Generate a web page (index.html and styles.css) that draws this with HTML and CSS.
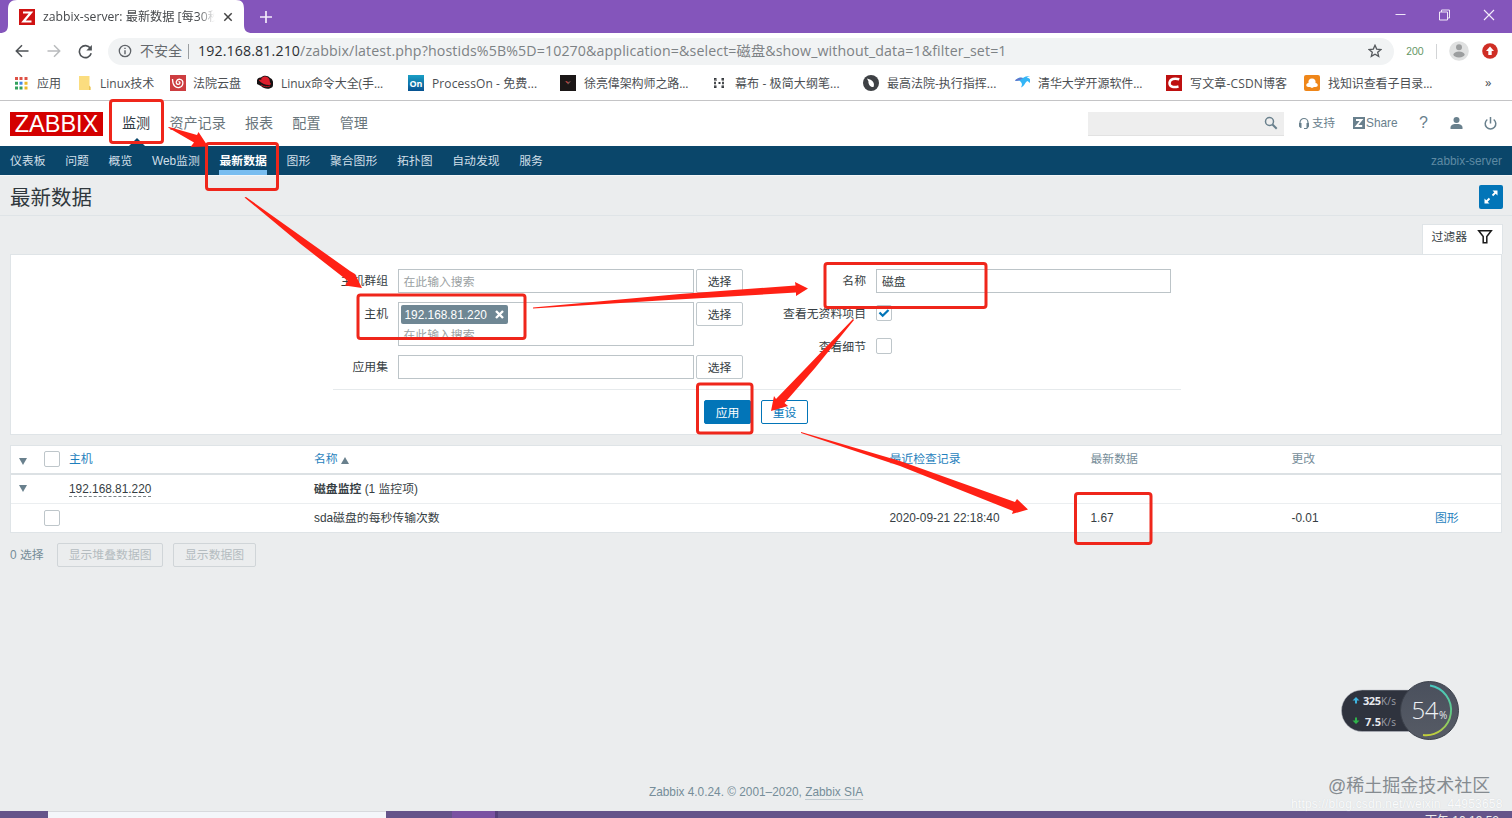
FILE: index.html
```html
<!DOCTYPE html>
<html lang="zh-CN">
<head>
<meta charset="utf-8">
<title>zabbix-server: 最新数据</title>
<link rel="stylesheet" href="styles.css">
</head>
<body>
<div class="screen">
  <header class="tabstrip">
    <svg class="tab-shape" width="262" height="33" viewBox="0 0 262 33"><path d="M0 33C5 33 8 31 8 25V9C8 3 11 0 17 0H236C242 0 244 3 244 9V25C244 31 247 33 252 33Z" fill="#fff"/></svg>
    <div class="tab">
      <svg width="16" height="16" viewBox="0 0 16 16"><rect width="16" height="16" fill="#cf1212"/><path d="M4 3.500H12L4.500 12.500H12.500" fill="none" stroke="#fff" stroke-width="2.200"/></svg>
      <span class="tab-title">zabbix-server: 最新数据 [每30秒</span>
      <svg class="tab-close" width="10" height="10" viewBox="0 0 10 10"><path d="M1.300 1.300L8.700 8.700M8.700 1.300L1.300 8.700" stroke="#444" stroke-width="1.500"/></svg>
    </div>
    <svg class="newtab" width="12" height="12" viewBox="0 0 12 12"><path d="M6 0V12M0 6H12" stroke="#f3ecfa" stroke-width="1.700"/></svg>
    <div class="winctl">
      <svg width="11" height="12" viewBox="0 0 11 12"><path d="M.5 5.500H10.500" stroke="#eee6f8"/></svg>
      <svg width="11" height="12" viewBox="0 0 11 12"><path d="M.5 3H8.500V11H.5ZM2.500 3V1H10.500V9H8.500" fill="none" stroke="#f0e8f8"/></svg>
      <svg width="12" height="12" viewBox="0 0 12 12"><path d="M1 1L11 11M11 1L1 11" stroke="#f5effb" stroke-width="1.100"/></svg>
    </div>
  </header>

  <div class="toolbar">
    <svg width="14" height="14" viewBox="0 0 14 14"><path d="M13.500 7H1.500M7 1.300L1.300 7L7 12.700" fill="none" stroke="#4e5256" stroke-width="1.500"/></svg>
    <svg width="14" height="14" viewBox="0 0 14 14"><path d="M.5 7H12.500M7 1.300L12.700 7L7 12.700" fill="none" stroke="#b9bbbd" stroke-width="1.500"/></svg>
    <svg width="15" height="15" viewBox="0 0 15 15"><path d="M12.400 4.300A6 6 0 1 0 13.200 9.200" fill="none" stroke="#4e5256" stroke-width="1.600"/><path d="M13.900 1V6.600H8.300Z" fill="#4e5256"/></svg>
    <div class="omnibox">
      <svg width="14" height="14" viewBox="0 0 14 14"><circle cx="7" cy="7" r="5.700" fill="none" stroke="#5f6368" stroke-width="1.300"/><path d="M7 6.200V10.200M7 3.700V5" stroke="#5f6368" stroke-width="1.400"/></svg>
      <span class="unsafe">不安全</span><i class="sep"></i>
      <span class="url"><b>192.168.81.210</b>/zabbix/latest.php?hostids%5B%5D=10270&amp;application=&amp;select=磁盘&amp;show_without_data=1&amp;filter_set=1</span>
      <svg class="star" width="14" height="14" viewBox="0 0 14 14"><path d="M7 1.300L8.700 5.100L12.900 5.500L9.700 8.300L10.700 12.400L7 10.200L3.300 12.400L4.300 8.300L1.100 5.500L5.300 5.100Z" fill="none" stroke="#55595d" stroke-width="1.300"/></svg>
    </div>
    <span class="ext200">200</span>
    <i class="toolsep"></i>
    <svg class="avatar" width="20" height="20" viewBox="0 0 20 20"><circle cx="10" cy="10" r="9.800" fill="#e0e1e1"/><circle cx="10" cy="6.200" r="3" fill="#9c9e9f"/><ellipse cx="10" cy="13.500" rx="5.600" ry="3" fill="#9c9e9f"/></svg>
    <svg class="update" width="16" height="16" viewBox="0 0 16 16"><circle cx="8" cy="8" r="7.800" fill="#cf2e25"/><path d="M8 3.500L12 8H9.700V12H6.300V8H4Z" fill="#fff"/></svg>
  </div>

  <nav class="bookmarks">
    <div class="bm"><svg width="16" height="16" viewBox="0 0 16 16"><path d="M2 2h3v3H2zM6.500 2h3v3h-3zM11.500 2h3v3h-3z" fill="#de5145"/><path d="M2 6.700h3v3H2zM2 11.400h3v3H2zM6.500 11.400h3v3h-3z" fill="#32a05c"/><path d="M6.500 6.700h3v3h-3z" fill="#4085e8"/><path d="M11.500 6.700h3v3h-3zM11.500 11.400h3v3h-3z" fill="#edb72a"/></svg><span>应用</span></div>
    <div class="bm"><svg width="16" height="16" viewBox="0 0 16 16"><path d="M3 1H13.500V11L14.500 12V15H3Z" fill="#fbdd7f"/><path d="M13 10.500L14.500 12V15H13Z" fill="#e9c45a"/></svg><span>Linux技术</span></div>
    <div class="bm"><svg class="nudge" width="16" height="16" viewBox="0 0 16 16"><rect width="16" height="16" fill="#cd3d40"/><path d="M2.500 4C2.500 11 6 13 9 12.500C14 11.500 14 5 10 4.300C6 3.700 5 9 8 9.400C10.500 9.500 10.500 6.500 8.500 6.600" fill="none" stroke="#fff" stroke-width="1.300"/></svg><span>法院云盘</span></div>
    <div class="bm"><svg width="16" height="16" viewBox="0 0 16 16"><path d="M0 9C-1 5 1 2 4 2.500C6 0 11 0 13 3C16 4 17 8 15.500 12C12 15 7 14 4 11Z" fill="#171213"/><path d="M4.500 3C7 .5 11 1 12.500 4.500L13 7.500C14.500 8.500 14 10 12 10C8 10 4 8 2 5.500C2 4.500 3 4 4.200 5Z" fill="#dc1e2c"/><path d="M4 10C7 12 10 12 13 11" stroke="#bb1420" fill="none"/></svg><span class="w-cmd">Linux命令大全(手...</span></div>
    <div class="bm"><svg width="16" height="16" viewBox="0 0 16 16"><defs><linearGradient id="on" x2="0" y2="1"><stop stop-color="#1a9fc5"/><stop offset="1" stop-color="#075291"/></linearGradient></defs><rect width="16" height="16" fill="url(#on)"/><text x="8" y="11.500" text-anchor="middle" textLength="13" lengthAdjust="spacingAndGlyphs" class="on-logo">On</text></svg><span class="w-on">ProcessOn - 免费...</span></div>
    <div class="bm"><svg width="16" height="16" viewBox="0 0 16 16"><rect width="16" height="16" fill="#1b1717"/><path d="M4.500 6L8 7L11 6L9.500 8L8 9.500L7 8Z" fill="#76534f"/><path d="M6 6.500L8 7.500" stroke="#d33"/></svg><span class="w-xu">徐亮偉架构师之路...</span></div>
    <div class="bm"><svg width="16" height="16" viewBox="0 0 16 16"><path d="M3 3h2.500v2.500H3zM3 7h2v2H3zM3 10.500h2.500V13H3zM10.500 3H13v2.500h-2.500zM11 7h2v2h-2zM10.500 10.500H13V13h-2.500zM7.500 7h2v2h-2z" fill="#34383d"/><path d="M4 4V12M12 4V12M4 4L6 6" stroke="#777" stroke-width=".7"/></svg><span class="w-mb">幕布 - 极简大纲笔...</span></div>
    <div class="bm"><svg width="16" height="16" viewBox="0 0 16 16"><circle cx="8" cy="8" r="8" fill="#3e4145"/><path d="M4 3.500L7 4.500C10 5.500 12 9 10.500 12C7.500 12.500 5 9 5.500 6.500Z" fill="#fff"/></svg><span>最高法院-执行指挥...</span></div>
    <div class="bm"><svg width="16" height="16" viewBox="0 0 16 16"><path d="M1 6C4 2 7 2 9 3Q11 1 16 1Q13 2 13 3C16 3 17 5 16 8L13.500 6C11 7 11 11 7 12.500C9 9 7.500 7 5 5.500Z" fill="#34b5f6"/><path d="M1 6C3 3 6 2 9 3L5 5.500Z" fill="#6575c9"/></svg><span class="w-xu">清华大学开源软件...</span></div>
    <div class="bm"><svg width="16" height="16" viewBox="0 0 16 16"><rect width="16" height="16" fill="#be1010"/><path d="M13.300 4.300C9 3 4 3.500 3.500 8C3.500 12.200 8 12.700 12.500 11.500" fill="none" stroke="#fff" stroke-width="2.500"/></svg><span class="w-csdn">写文章-CSDN博客</span></div>
    <div class="bm"><svg width="16" height="16" viewBox="0 0 16 16"><rect width="16" height="16" rx="2" fill="#ef8619"/><path d="M4.500 8C4 5 5.500 3.500 8 3.500S12 5 11.500 8C14.500 8.500 14.500 12 11.500 12H10L8 13L6 12H4.500C1.500 12 1.500 8.500 4.500 8Z" fill="#fff"/></svg><span class="w-xu">找知识查看子目录...</span></div>
    <div class="more">»</div>
  </nav>

  <main class="zbx">
    <div class="mainbar">
      <div class="logo"><span>ZABBIX</span></div>
      <nav class="mainmenu"><span class="cur">监测</span><span>资产记录</span><span>报表</span><span>配置</span><span>管理</span></nav>
      <div class="search"><svg width="14" height="14" viewBox="0 0 14 14"><circle cx="5.500" cy="5.500" r="4" fill="none" stroke="#69808d" stroke-width="1.500"/><path d="M8.500 8.500L12.700 12.700" stroke="#69808d" stroke-width="2"/></svg></div>
      <div class="userlinks">
        <svg width="12" height="13" viewBox="0 0 12 13"><path d="M2 8V5.500A4 4 0 0 1 10 5.500V8" fill="none" stroke="#69808d" stroke-width="1.200"/><path d="M1 6H3.500V11H2.500L1 9.500ZM8.500 6H11V9.500L9 12H6V11H8.500Z" fill="#69808d"/></svg><span class="support">支持</span>
        <svg width="12" height="12" viewBox="0 0 12 12"><rect width="12" height="12" fill="#69808d"/><path d="M3 3H8.500L3.500 9H9.200" fill="none" stroke="#fff" stroke-width="1.800"/></svg><span class="share">Share</span>
        <span class="help">?</span>
        <svg width="13" height="12" viewBox="0 0 13 12"><circle cx="6.500" cy="3" r="3" fill="#69808d"/><path d="M.5 12V10C1 7.500 4 7 6.500 7S12 7.500 12.500 10V12Z" fill="#69808d"/></svg>
        <svg class="power" width="13" height="13" viewBox="0 0 13 13"><path d="M3.300 2.500A5.300 5.300 0 1 0 9.700 2.500M6.500 0V6.500" fill="none" stroke="#69808d" stroke-width="1.500"/></svg>
      </div>
    </div>
    <div class="subbar">
      <span>仪表板</span><span>问题</span><span>概览</span><span>Web监测</span><span class="sel">最新数据</span><span>图形</span><span>聚合图形</span><span>拓扑图</span><span>自动发现</span><span>服务</span>
      <span class="server">zabbix-server</span>
    </div>
    <div class="titlerow">
      <h1>最新数据</h1>
      <div class="full"><svg width="16" height="16" viewBox="0 0 16 16"><path d="M9.500 6.500L13 3M6.500 9.500L3 13" stroke="#fff" stroke-width="1.800"/><path d="M9.500 1.500H14.500V6.500ZM1.500 9.500V14.500H6.500Z" fill="#fff"/></svg></div>
    </div>
    <div class="filtertabs"><div class="filtertab"><span>过滤器</span><svg width="16" height="16" viewBox="0 0 16 16"><path d="M1.700 1.700H14.300L9.800 7.500V13.800H6.200V7.500Z" fill="none" stroke="#1b1b1b" stroke-width="1.500"/></svg></div></div>
    <section class="filter">
      <div class="formcols">
        <div class="col-left">
          <label>主机群组</label><div class="field ph">在此输入搜索</div><div class="btn">选择</div>
          <label>主机</label><div class="field tall"><div class="chip"><span>192.168.81.220</span><svg width="9" height="9" viewBox="0 0 9 9"><path d="M1 1L8 8M8 1L1 8" stroke="#fff" stroke-width="2.400"/></svg></div><div class="ph2">在此输入搜索</div></div><div class="btn">选择</div>
          <label>应用集</label><div class="field"></div><div class="btn">选择</div>
        </div>
        <div class="col-right">
          <label>名称</label><div class="field name">磁盘</div>
          <label>查看无资料项目</label><div class="box"><svg width="14" height="14" viewBox="0 0 14 14"><path d="M2.500 6.500L5.700 9.700L11.500 4" fill="none" stroke="#0275b8" stroke-width="2.300"/></svg></div>
          <label>查看细节</label><div class="box"></div>
        </div>
      </div>
      <div class="actions"><div class="btn apply">应用</div><div class="btn reset">重设</div></div>
    </section>
    <section class="table">
      <div class="tr th"><i class="tri down"></i><div class="box"></div><span class="link">主机</span><span class="link">名称 <i class="tri up"></i></span><span class="link">最近检查记录</span><span>最新数据</span><span>更改</span><span></span></div>
      <div class="tr group"><i class="tri down"></i><i></i><span><u>192.168.81.220</u></span><span><b>磁盘监控</b> (1 监控项)</span></div>
      <div class="tr item"><i></i><div class="box"></div><span></span><span>sda磁盘的每秒传输次数</span><span>2020-09-21 22:18:40</span><span>1.67</span><span>-0.01</span><span class="link">图形</span></div>
    </section>
    <div class="bulk"><span>0 选择</span><div class="dis">显示堆叠数据图</div><div class="dis">显示数据图</div></div>
    <footer class="foot">Zabbix 4.0.24. © 2001–2020, <u>Zabbix SIA</u></footer>
  </main>
  <div class="taskbar"><i class="tb-a"></i><i class="tb-win"></i><i class="tb-b"></i><i class="tb-act"></i><span>下午 10:19:52</span></div>

  <div class="watermark">@稀土掘金技术社区</div>
  <div class="watermark-url">https://blog.csdn.net/weixin_44953658</div>

  <svg class="meter" width="130" height="72" viewBox="0 0 130 72">
    <defs><linearGradient id="ring" x2="0" y2="1"><stop stop-color="#48c8c0"/><stop offset=".55" stop-color="#62c985"/><stop offset="1" stop-color="#c3cf3a"/></linearGradient><linearGradient id="ball" x2="0" y2="1"><stop stop-color="#4a505d"/><stop offset="1" stop-color="#565b65"/></linearGradient></defs>
    <rect x="6.500" y="15" width="90" height="41.500" rx="20.700" fill="#2f333e" stroke="#b9bec6" stroke-opacity=".5"/>
    <circle cx="94.500" cy="35.500" r="29" fill="url(#ball)" stroke="#3b404a"/>
    <path d="M95 10.500A25 25 0 0 1 88 60" fill="none" stroke="url(#ring)" stroke-width="1.900"/>
    <path d="M21 22L24.500 25.500H22V28.500H20V25.500H17.500Z" fill="#3eb4df"/>
    <path d="M21 49L24.500 45.500H22V42.500H20V45.500H17.500Z" fill="#2fb34a"/>
    <text x="28" y="30" class="m-val" textLength="18">325</text><text x="46" y="30" class="m-unit" textLength="15">K/s</text>
    <text x="30" y="50.500" class="m-val" textLength="16">7.5</text><text x="46" y="50.500" class="m-unit" textLength="15">K/s</text>
    <text x="76.500" y="43.500" class="m-big" textLength="27">54</text><text x="104" y="43.500" class="m-pct">%</text>
  </svg>

  <svg class="marks" width="1512" height="818" viewBox="0 0 1512 818">
    <g fill="none" stroke="#ef261b" stroke-width="3">
      <rect x="110.500" y="100.500" width="52" height="42" rx="2.500"/>
      <rect x="206.500" y="143.500" width="71" height="46" rx="2.500"/>
      <rect x="358" y="295" width="167" height="43.500" rx="2.500"/>
      <rect x="825" y="263.500" width="161" height="44" rx="2.500"/>
      <rect x="697.500" y="384" width="54.500" height="49" rx="2.500"/>
      <rect x="1075.500" y="493.500" width="75.500" height="50" rx="2.500"/>
    </g>
    <g fill="#ff2115">
      <path d="M168 127.500L169 127L197 135L198.500 132L208 146.500L190.500 147L194 142.500Z"/>
      <path d="M244.500 197.500L246 197L350 271L355 274L362 288L345 285.500L348 281L300 243.500Z"/>
      <path d="M533 308.500V307.500L680 294L795.500 285.500L795 282L808 288.500L796 296L796 292.500L660 300.500Z"/>
      <path d="M854 320L853 319L804 370L776 399L774 396L771 411L788 406L784.500 403L815 368Z"/>
      <path d="M801 432V433L900 466L1013 511L1012 514L1028 509.500L1017 499L1015 502L900 461Z"/>
    </g>
  </svg>
</div>
</body>
</html>
```
FILE: styles.css
```css
* { box-sizing: border-box; }
body { margin: 0; }
i { font-style: normal; }
svg { flex: none; display: block; }
.screen {
  position: relative; width: 1512px; height: 818px; overflow: hidden;
  display: flex; flex-direction: column; background: #ebedee;
  font: 11.850px/16px "Liberation Sans", "Noto Sans CJK SC", sans-serif;
  color: #363e43; white-space: nowrap;
}
.tabstrip { position: relative; height: 33px; background: #8455bb; display: flex; align-items: center; flex: none; }
.tab-shape { position: absolute; left: 0; top: 0; }
.tab { position: relative; width: 259px; padding-left: 19px; display: flex; align-items: center; }
.tab-title {
  margin-left: 8px; width: 172px; overflow: hidden; color: #45484b;
  font: 12.2px/18px "Open Sans", "Noto Sans CJK SC", sans-serif;
  -webkit-mask-image: linear-gradient(90deg, #000 90%, transparent);
}
.tab-close { margin-left: 8px; }
.newtab { margin-left: 1px; }
.winctl { margin-left: auto; display: flex; gap: 33px; padding-right: 17px; margin-top: -4px; }

.toolbar { height: 36px; background: #fff; display: flex; align-items: center; padding: 0 14px 0 15px; flex: none; }
.toolbar > svg:nth-child(2) { margin-left: 18px; }
.toolbar > svg:nth-child(3) { margin-left: 17px; }
.omnibox {
  margin-left: 15px; width: 1286px; height: 27px; border-radius: 14px; background: #f1f3f4;
  display: flex; align-items: center; padding: 0 12px 0 10px;
  font: 15px/22px "Open Sans", "Noto Sans CJK SC", sans-serif; color: #7d8285;
}
.unsafe { margin-left: 8px; font-size: 14px; width: 42px; color: #65696d; }
.sep { width: 1px; height: 15px; background: #9a9ea1; margin: 0 9px 0 6px; }
.url { font-size: 14.2px; letter-spacing: .12px; }
.url b { font-weight: 400; color: #2c2f33; }
.star { margin-left: auto; }
.ext200 { font: 10px/14px Inter, sans-serif; letter-spacing: -.4px; color: #679867; margin-left: 12px; width: 18px; }
.toolsep { width: 1px; height: 15px; background: #d2d4d6; margin-left: 12px; }
.avatar { margin-left: 12px; }
.update { margin-left: auto; }

.bookmarks {
  height: 32px; flex: none; background: #fff; border-bottom: 1px solid #c4c4c6;
  display: grid; grid-template-columns: 63px 93px 88px 151px 152px 151px 152px 151px 152px 138px 181px 20px;
  align-items: center; padding: 0 0 3px 13px; color: #4c4f53;
  font: 12px/18px "Open Sans", "Noto Sans CJK SC", sans-serif;
}
.bm { display: flex; align-items: center; gap: 8px; }
.bm span { padding-top: 1px; }
.nudge { margin: 0 -1px 0 1px; }
.w-cmd { letter-spacing: -.08px; }
.w-on { letter-spacing: .1px; }
.w-xu { letter-spacing: -.1px; }
.w-mb { letter-spacing: .1px; }
.w-csdn { letter-spacing: .15px; }
.on-logo { font: bold 9px "Open Sans", sans-serif; fill: #fff; }
.more { font-size: 13px; margin-top: -3px; }

.zbx { flex: 1; display: flex; flex-direction: column; min-height: 0; }
.mainbar { height: 45px; flex: none; background: #fff; display: flex; align-items: center; padding: 0 15px 0 10px; }
.logo { width: 93px; height: 24px; background: #d40000; display: flex; justify-content: center; align-items: center; color: #fff; font: 23.5px/24px "Liberation Sans", sans-serif; }
.mainmenu { display: flex; gap: 19.2px; margin: -2px 0 0 19px; font-size: 14.1px; line-height: 20px; color: #69757b; }
.mainmenu span { position: relative; }
.mainmenu .cur { color: #2f3c44; }
.mainmenu .cur::after { content: ""; position: absolute; left: 7px; top: 25px; border: 8px solid transparent; border-bottom-color: #0a466a; border-top: 0; }
.search { margin-left: auto; width: 196px; height: 24px; background: #eee; border-bottom: 1px solid #e2e2e2; display: flex; align-items: center; justify-content: flex-end; padding-right: 6px; }
.userlinks { display: flex; align-items: center; margin: -1px 0 0 14px; color: #69808d; width: 199px; }
.support { margin-left: 2px; width: 41px; font-size: 11.500px; }
.share { margin-left: 1px; width: 53px; }
.help { font-size: 16px; width: 31px; }
.power { margin-left: auto; }
.subbar { height: 30px; flex: none; background: #0a466a; border-bottom: 1px solid #f5f7f8; display: flex; align-items: center; gap: 19.700px; padding: 0 10px; color: #d0dfe8; }
.subbar .sel { position: relative; color: #fff; font-weight: 700; }
.subbar .sel::after { content: ""; position: absolute; left: 0; right: 0; top: 17px; height: 5px; background: #78bdf0; }
.subbar .server { margin-left: auto; color: #5e8aa3; }
.titlerow { height: 40px; flex: none; display: flex; align-items: center; justify-content: space-between; padding: 2px 9.500px 0 10px; border-bottom: 1px solid #dfe4e7; }
h1 { margin: 2px 0 0; font-size: 20.5px; line-height: 28px; font-weight: 400; color: #30383d; }
.full { width: 24px; height: 24px; background: #0275b8; border-radius: 2px; display: grid; place-items: center; }
.filtertabs { height: 38px; flex: none; display: flex; justify-content: flex-end; align-items: flex-end; padding-right: 9.500px; }
.filtertab { width: 81px; height: 30px; background: #fff; border: 1px solid #dfe4e7; border-bottom: 0; display: flex; align-items: center; padding: 0 9px 5px; }
.filtertab svg { margin-left: auto; margin-top: -1px; }
.filter { height: 181px; flex: none; margin: 0 10px; background: #fff; border: 1px solid #dfe4e7; padding: 14px 0 0; }
.formcols { width: 848px; margin-left: 322px; height: 121px; border-bottom: 1px solid #e6eaec; display: flex; }
.col-left { width: 411px; display: grid; grid-template-columns: 55px 305px 47px; grid-template-rows: 24px 44px 24px; row-gap: 9px; align-items: start; }
.col-left .field { margin-left: 9.500px; width: 296px; }
.col-left .btn { margin-left: 3px; }
.col-left label, .col-right label { text-align: right; line-height: 25px; }
.field { height: 24px; border: 1px solid #bcc4c8; background: #fff; padding: 0 5px; line-height: 24px; }
.ph, .ph2 { color: #9a9fa2; }
.field.tall { height: 44px; padding: 2px; overflow: hidden; }
.chip { width: 107px; height: 19px; border-radius: 2px; background: #6f8794; color: #fff; display: flex; align-items: center; justify-content: space-between; padding: 0 4px; line-height: 18px; }
.ph2 { height: 14px; overflow: hidden; line-height: 20px; padding-left: 3px; margin-top: 1px; }
.btn { width: 47px; height: 24px; border: 1px solid #c0c8cc; border-radius: 2px; background: #fff; text-align: center; line-height: 24px; }
.col-right { width: 437px; display: grid; grid-template-columns: 122px 295px; grid-template-rows: 24px 24px 24px; column-gap: 10px; row-gap: 9px; align-items: start; }
.box { width: 16px; height: 16px; border: 1px solid #bec6ca; border-radius: 2px; background: #fff; }
.col-right .box { margin-top: 3px; }
.actions { display: flex; justify-content: center; gap: 10px; padding-top: 10px; }
.apply { background: #0275b8; border-color: #0275b8; color: #fff; }
.reset { border-color: #0275b8; color: #0275b8; }
.table { flex: none; margin: 10px 10px 0; height: 88px; border: 1px solid #dfe4e7; background: #fff; }
.tr { display: grid; grid-template-columns: 33px 25px 245px 575.500px 201px 201px 143.500px 60px; align-items: center; }
.th { height: 29px; border-bottom: 2px solid #dce1e4; color: #768d99; padding-bottom: 1px; }
.th .tri.down { margin-top: 4px; }
.group { border-bottom: 1px solid #ebeef0; height: 29px; }
.item { height: 28px; }
.link { color: #1f7fbd; }
.tri { display: inline-block; border: 4.500px solid transparent; width: 0; height: 0; }
.down { border-top: 7px solid #69808d; border-bottom: 0; margin-left: 8px; }
.group .tri { margin-top: -2px; }
.up { border-bottom: 7px solid #69808d; border-top: 0; vertical-align: -1px; border-left-width: 4px; border-right-width: 4px; }
.tr u { text-decoration: none; border-bottom: 1px dashed #788186; }
.bulk { display: flex; align-items: center; gap: 10px; padding: 10px 10px 0; color: #768d99; }
.bulk span { width: 37px; }
.dis { height: 24px; border: 1px solid #d0d5d8; border-radius: 2px; padding: 0 10.700px; line-height: 23px; color: #b4bcc0; }
.foot { margin: auto auto 11px; color: #768d99; }
.foot u { text-decoration: none; border-bottom: 1px solid #c1cbd0; }
.taskbar { height: 7px; flex: none; display: flex; background: #65548a; overflow: hidden; color: #eee; }
.tb-a { width: 48px; }
.tb-win { width: 338px; background: #f4f6fa; border-top: 1px solid #d8d9dd; }
.tb-b { width: 66px; }
.tb-act { width: 46px; background: #7a52a2; border-right: 3px solid #553f7a; }
.taskbar span { margin-left: auto; padding: 2px 13px 0 0; font-size: 12px; }
.watermark { position: absolute; left: 1328px; top: 774px; font-size: 18px; line-height: 24px; color: #858b90; }
.watermark-url { position: absolute; left: 1291px; top: 796px; font-size: 12px; letter-spacing: .2px; color: #fafbfc; text-shadow: 0 0 1px #ccd0d3; }
.meter { position: absolute; left: 1335px; top: 675px; }
.m-val { font: bold 11px "Open Sans", sans-serif; fill: #e7e9ee; }
.m-unit { font: 10px "Open Sans", sans-serif; fill: #9b9fa7; }
.m-big { font: 300 24px "Open Sans", sans-serif; fill: #eef1f5; }
.m-pct { font: 10px "Open Sans", sans-serif; fill: #e4e7ec; }
.marks { position: absolute; left: 0; top: 0; pointer-events: none; }
```
